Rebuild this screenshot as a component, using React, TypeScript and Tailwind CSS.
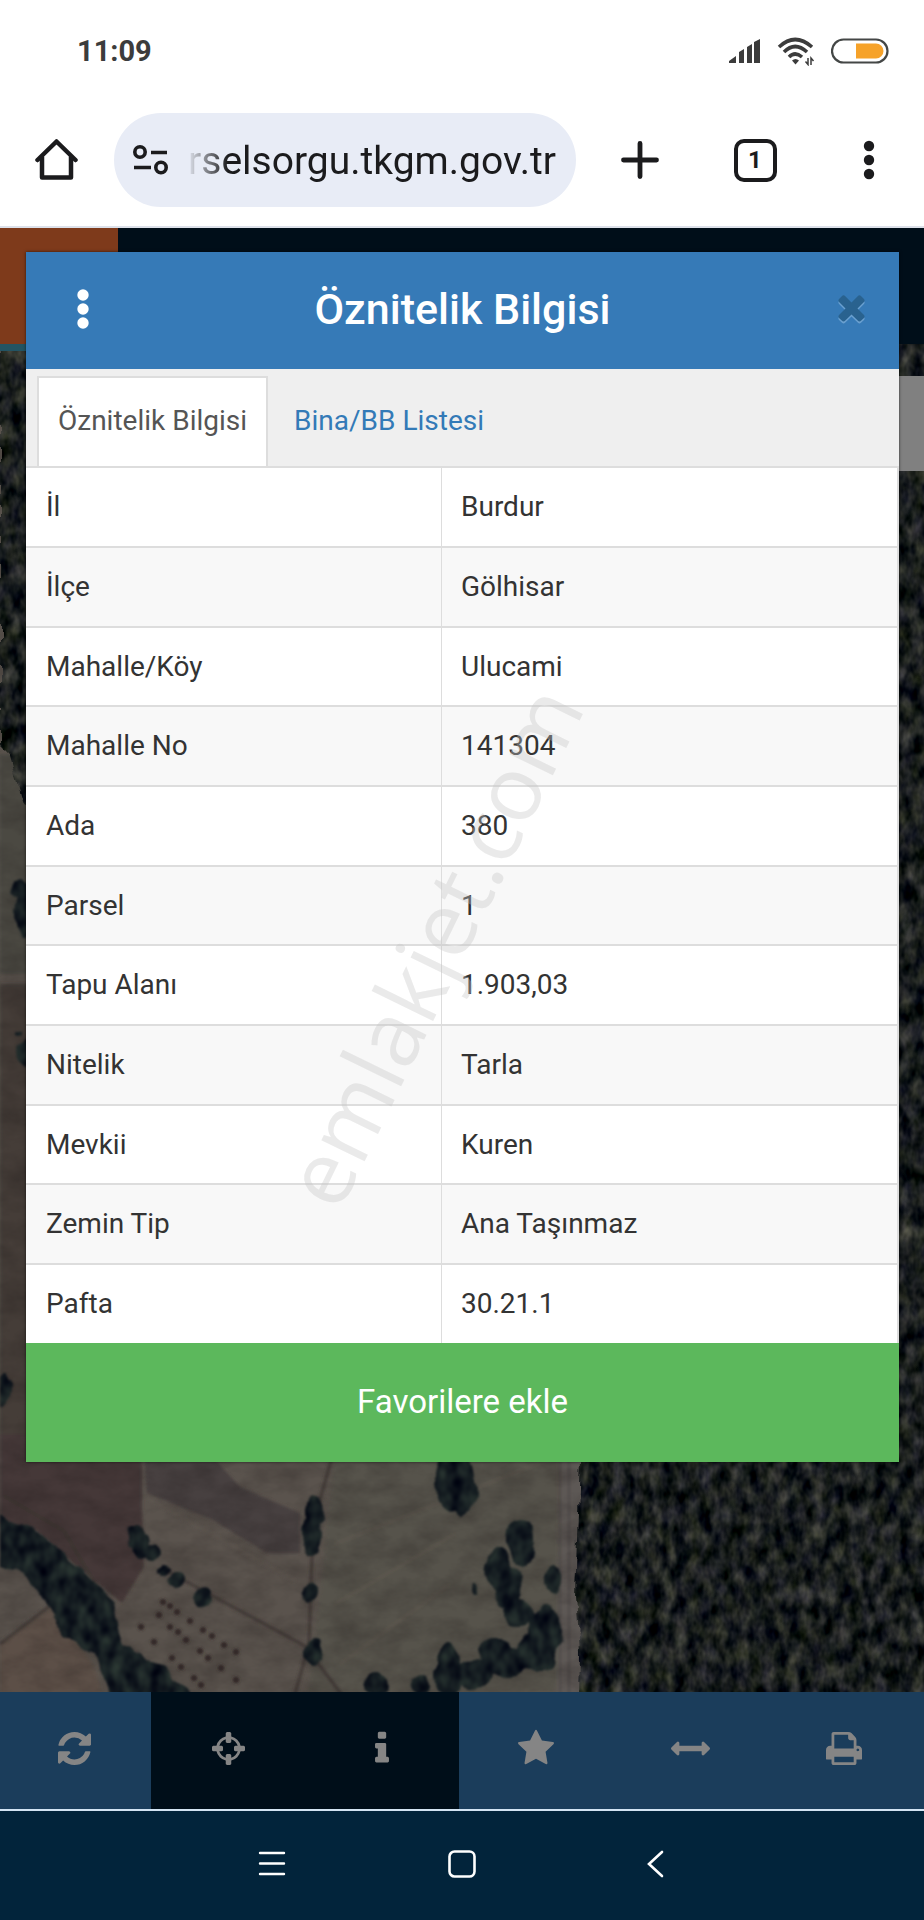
import { useState } from "react";

const rows: [string, string][] = [
  ["İl", "Burdur"],
  ["İlçe", "Gölhisar"],
  ["Mahalle/Köy", "Ulucami"],
  ["Mahalle No", "141304"],
  ["Ada", "380"],
  ["Parsel", "1"],
  ["Tapu Alanı", "1.903,03"],
  ["Nitelik", "Tarla"],
  ["Mevkii", "Kuren"],
  ["Zemin Tip", "Ana Taşınmaz"],
  ["Pafta", "30.21.1"],
];

const glyphs = {
  refresh: {
    w: 1536,
    d: "M1511 1056q0 5-1 7-64 268-268 434.5t-478 166.5q-146 0-282.5-55t-243.5-157l-129 129q-19 19-45 19t-45-19-19-45v-448q0-26 19-45t45-19h448q26 0 45 19t19 45-19 45l-137 137q71 66 161 102t187 36q134 0 250-65t186-179q11-17 53-117 8-23 30-23h192q13 0 22.5 9.5t9.5 22.5zm25-800v448q0 26-19 45t-45 19h-448q-26 0-45-19t-19-45 19-45l138-138q-148-137-349-137-134 0-250 65t-186 179q-11 17-53 117-8 23-30 23h-199q-13 0-22.5-9.5t-9.5-22.5v-7q65-268 270-434.5t480-166.5q146 0 284 55.5t245 156.5l130-129q19-19 45-19t45 19 19 45z",
  },
  crosshairs: {
    w: 1536,
    d: "M1197 1024h-109q-26 0-45-19t-19-45v-128q0-26 19-45t45-19h109q-32-108-112.5-188.5t-188.5-112.5v109q0 26-19 45t-45 19h-128q-26 0-45-19t-19-45v-109q-108 32-188.5 112.5t-112.5 188.5h109q26 0 45 19t19 45v128q0 26-19 45t-45 19h-109q32 108 112.5 188.5t188.5 112.5v-109q0-26 19-45t45-19h128q26 0 45 19t19 45v109q108-32 188.5-112.5t112.5-188.5zm339-192v128q0 26-19 45t-45 19h-143q-37 161-154.5 278.5t-278.5 154.5v143q0 26-19 45t-45 19h-128q-26 0-45-19t-19-45v-143q-161-37-278.5-154.5t-154.5-278.5h-143q-26 0-45-19t-19-45v-128q0-26 19-45t45-19h143q37-161 154.5-278.5t278.5-154.5v-143q0-26 19-45t45-19h128q26 0 45 19t19 45v143q161 37 278.5 154.5t154.5 278.5h143q26 0 45 19t19 45z",
  },
  info: {
    w: 640,
    d: "M640 1344v128q0 26-19 45t-45 19h-512q-26 0-45-19t-19-45v-128q0-26 19-45t45-19h64v-384h-64q-26 0-45-19t-19-45v-128q0-26 19-45t45-19h384q26 0 45 19t19 45v576h64q26 0 45 19t19 45zm-128-1152v192q0 26-19 45t-45 19h-256q-26 0-45-19t-19-45v-192q0-26 19-45t45-19h256q26 0 45 19t19 45z",
  },
  star: {
    w: 1664,
    d: "M1664 647q0 22-26 48l-363 354 86 500q1 7 1 20 0 21-10.5 35.5t-30.5 14.5q-19 0-40-12l-449-236-449 236q-22 12-40 12-21 0-31.5-14.5t-10.5-35.5q0-6 2-20l86-500-364-354q-25-27-25-48 0-37 56-46l502-73 225-455q19-41 49-41t49 41l225 455 502 73q56 9 56 46z",
  },
  arrows: {
    w: 1792,
    d: "M1792 896q0 26-19 45l-256 256q-19 19-45 19t-45-19-19-45v-128h-1024v128q0 26-19 45t-45 19-45-19l-256-256q-19-19-19-45t19-45l256-256q19-19 45-19t45 19 19 45v128h1024v-128q0-26 19-45t45-19 45 19l256 256q19 19 19 45z",
  },
  print: {
    w: 1664,
    d: "M384 1536h896v-256h-896v256zm0-640h896v-384h-160q-40 0-68-28t-28-68v-160h-640v640zm1152 64q0-26-19-45t-45-19-45 19-19 45 19 45 45 19 45-19 19-45zm128 0v416q0 13-9.5 22.5t-22.5 9.5h-224v160q0 40-28 68t-68 28h-960q-40 0-68-28t-28-68v-160h-224q-13 0-22.5-9.5t-9.5-22.5v-416q0-79 56.5-135.5t135.5-56.5h64v-544q0-40 28-68t68-28h672q40 0 88 20t76 48l152 152q28 28 48 76t20 88v256h64q79 0 135.5 56.5t56.5 135.5z",
  },
  times: {
    w: 1408,
    d: "M1298 1322q0 40-28 68l-136 136q-28 28-68 28t-68-28l-294-294-294 294q-28 28-68 28t-68-28l-136-136q-28-28-28-68t28-68l294-294-294-294q-28-28-28-68t28-68l136-136q28-28 68-28t68 28l294 294 294-294q28-28 68-28t68 28l136 136q28 28 28 68t-28 68l-294 294 294 294q28 28 28 68z",
  },
};

function Glyph({ name, className }: { name: keyof typeof glyphs; className: string }) {
  const g = glyphs[name];
  return (
    <svg viewBox={`0 0 ${g.w} 1792`} className={className} fill="currentColor" aria-hidden="true">
      <path d={g.d} />
    </svg>
  );
}

function StatusBar() {
  return (
    <div className="flex h-[101px] items-center justify-between pr-[35px] pl-[77px] text-[#3c3c3c]">
      <span className="text-[29px] leading-9 font-bold">11:09</span>
      <div className="flex items-center gap-4">
        <svg width="32" height="26" viewBox="0 0 32 26" fill="currentColor" aria-hidden="true">
          <path d="M0 25v-2l7-5v7zM10 25V14l5-3v14zM18 25V9l5-3v19zM25 25V4l6-3v24z" />
        </svg>
        <svg width="38" height="30" viewBox="0 0 38 30" fill="none" stroke="currentColor" aria-hidden="true">
          <g strokeWidth="3.6">
            <path d="M2 11Q18-4 35 11" />
            <path d="M7 16Q18 5 30 16" />
            <path d="M12 21Q18 15 25 21" />
          </g>
          <path d="M15 24.5q3.500-3 7 0L18.500 28.500z" fill="currentColor" stroke="none" />
          <path d="M31 22v6.500l-2.500-3M34 29v-7l2.500 3" strokeWidth="1.500" />
        </svg>
        <svg width="58" height="26" viewBox="0 0 58 26" aria-hidden="true">
          <rect x="1" y="1.500" width="55.500" height="23" rx="11.500" fill="none" stroke="#444746" strokeWidth="2.200" />
          <path d="M25 5.500h20a7.500 7.500 0 0 1 0 15H25z" fill="#f6a229" />
        </svg>
      </div>
    </div>
  );
}

function BrowserBar() {
  return (
    <div className="flex items-start border-b-2 border-[#dde1ea] pt-3 pb-[19px] pl-[34px] text-[#1b1b1d]">
      <button aria-label="Ana sayfa" className="flex h-[94px] w-11 items-center justify-center">
        <svg width="44" height="44" viewBox="0 0 44 44" fill="none" stroke="currentColor" strokeWidth="4.500" strokeLinejoin="round" strokeLinecap="round" aria-hidden="true">
          <path d="M3.500 22 22.500 3.500 41.500 22" />
          <path d="M8 19v20.500h29V19" />
        </svg>
      </button>
      <div className="ml-9 flex h-[94px] min-w-0 flex-1 items-center rounded-full bg-[#e8ecf6] pr-5 pl-[18px]">
        <svg width="38" height="32" viewBox="0 0 38 32" className="shrink-0" fill="none" stroke="currentColor" strokeWidth="3.600" aria-hidden="true">
          <circle cx="8" cy="8" r="5.200" />
          <path d="M19 8.500h16M2 23.500h17" />
          <circle cx="29" cy="23.500" r="5.200" />
        </svg>
        <input
          readOnly
          aria-label="Adres"
          value="rselsorgu.tkgm.gov.tr"
          className="ml-2 w-full min-w-0 bg-transparent pt-0.5 text-right text-[39px] leading-[48px] outline-none [mask-image:linear-gradient(to_right,transparent_8px,black_50px)]"
        />
      </div>
      <div className="ml-2 grid h-[94px] w-[340px] grid-cols-[112px_118px_1fr] items-center justify-items-center">
        <button aria-label="Yeni sekme">
          <svg width="38" height="38" viewBox="0 0 38 38" stroke="currentColor" strokeWidth="4.800" strokeLinecap="round" aria-hidden="true">
            <path d="M19 2.500v33M2.500 19h33" />
          </svg>
        </button>
        <button aria-label="Sekmeler" className="flex h-[43px] w-[43px] items-center justify-center rounded-[10px] border-4 border-current text-[24px] leading-6 font-bold">
          1
        </button>
        <button aria-label="Menü">
          <svg width="12" height="40" viewBox="0 0 12 40" fill="currentColor" aria-hidden="true">
            <circle cx="6" cy="6" r="5.200" />
            <circle cx="6" cy="20" r="5.200" />
            <circle cx="6" cy="34" r="5.200" />
          </svg>
        </button>
      </div>
    </div>
  );
}

const bushes: [number, number, number, number][] = [
  [315, 1168, 8, 15], [312, 1190, 9, 20], [309, 1249, 8, 10], [314, 1308, 9, 13],
  [134, 1192, 8, 12], [142, 1202, 9, 12], [153, 1208, 6, 7], [176, 1236, 9, 7], [203, 1254, 9, 10], [165, 1226, 5, 5],
  [455, 1136, 20, 32], [463, 1150, 14, 22], [520, 1194, 14, 20], [523, 1208, 10, 16], [498, 1226, 12, 22],
  [508, 1245, 15, 20], [519, 1270, 14, 14], [553, 1235, 8, 14], [474, 1245, 3, 6],
  [545, 1290, 16, 30], [535, 1310, 20, 18], [545, 1315, 10, 12], [495, 1310, 16, 18], [508, 1318, 22, 14],
  [475, 1330, 20, 15], [449, 1332, 14, 20], [448, 1318, 10, 18], [420, 1342, 10, 8], [376, 1340, 10, 12],
  [4, 1046, 9, 16], [22, 545, 12, 10], [24, 570, 9, 22], [16, 690, 3, 3], [26, 708, 8, 14],
];

const stumps = [
  [163, 1258], [170, 1262], [177, 1268], [190, 1277], [203, 1286], [212, 1292], [224, 1301], [236, 1308],
  [141, 1283], [154, 1298], [159, 1271], [170, 1283], [178, 1288], [186, 1296], [200, 1307], [208, 1314],
  [221, 1324], [172, 1314], [181, 1323], [194, 1334], [201, 1341], [236, 1336],
];

function SatelliteMap() {
  return (
    <svg className="h-full w-full" viewBox="0 0 924 1465" preserveAspectRatio="xMidYMax slice" aria-hidden="true">
      <defs>
        <filter id="forest" filterUnits="userSpaceOnUse" x="0" y="0" width="924" height="1465" colorInterpolationFilters="sRGB">
          <feTurbulence type="fractalNoise" baseFrequency="0.05" numOctaves="2" seed="3" result="d" />
          <feDisplacementMap in="SourceGraphic" in2="d" scale="14" xChannelSelector="R" yChannelSelector="G" result="shape" />
          <feTurbulence type="fractalNoise" baseFrequency="0.08 0.05" numOctaves="3" seed="8" />
          <feColorMatrix values="0.5 0.08 0 0 -0.19  0.46 0.1 0 0 -0.165  0.4 0 0.08 0 -0.125  0 0 0 0 1" />
          <feGaussianBlur stdDeviation="0.6" />
          <feComposite in2="shape" operator="in" />
        </filter>
        <filter id="grove" filterUnits="userSpaceOnUse" x="0" y="0" width="924" height="1465" colorInterpolationFilters="sRGB">
          <feTurbulence type="fractalNoise" baseFrequency="0.05" numOctaves="2" seed="3" result="d" />
          <feDisplacementMap in="SourceGraphic" in2="d" scale="12" xChannelSelector="R" yChannelSelector="G" result="shape" />
          <feTurbulence type="fractalNoise" baseFrequency="0.08 0.06" numOctaves="2" seed="4" />
          <feColorMatrix values="0.25 0 0 0 -0.04  0.3 0 0 0 -0.035  0.2 0 0 0 0.03  0 0 0 0 1" />
          <feComposite in2="shape" operator="in" />
          <feGaussianBlur stdDeviation="1.2" />
        </filter>
        <filter id="soil" x="0" y="0" width="100%" height="100%" colorInterpolationFilters="sRGB">
          <feTurbulence type="fractalNoise" baseFrequency="0.03 0.05" numOctaves="4" seed="5" />
          <feColorMatrix values="0 0 0 0 0.1  0 0 0 0 0.08  0 0 0 0 0.08  1.1 0 0 0 -0.35" />
        </filter>
        <filter id="soft">
          <feGaussianBlur stdDeviation="1.5" />
        </filter>
      </defs>
      <rect width="924" height="1465" fill="#5a534d" />
      <g filter="url(#soft)">
        <path d="M0 410h30v220H0z" fill="#4b4842" />
        <path d="M0 640h40v470H0z" fill="#453c39" />
        <path d="M0 1090h142v75l2 58-22 36-42-34-44-38L0 1180z" fill="#453937" />
        <path d="M142 1090h50l48 53 60 26v40h-33l-54-33-66-27z" fill="#474040" />
        <path d="M334 1110h224v238H308l12-100z" fill="#57534b" />
        <path d="M0 1300l54-38 40 60 12 40H0z" fill="#5c5046" />
        <path d="M560 1110h24v255h-28z" fill="#5d5855" />
        <path d="M4 1152l60 35 50 85M165 1226l140 76 40 53M333 1110l-20 70-4 120-14 50M0 1300l55-42" fill="none" stroke="#3f3835" strokeWidth="3" />
        <path d="M145 1152l150 85M335 1200l215-85M335 1260l120-70M340 1320l110-80" fill="none" stroke="#625b53" strokeWidth="2" opacity=".6" />
        <path d="M560 1110v245M569 1110v245" stroke="#494441" strokeWidth="1.500" />
      </g>
      <rect width="924" height="1465" filter="url(#soil)" opacity=".4" />
      <g filter="url(#forest)">
        <path d="M0-10h40v480L24 460 10 410 0 400z" />
        <path d="M582 1090h358v400H576l4-180-4-60z" />
        <path d="M890-10h60v1200h-60z" />
      </g>
      <g filter="url(#grove)">
        <path d="M-10 1170l46 16 44 37 34 36 8 40 46 26 24 30h-82l-14-46-30-14-24-42-24-28-28-2z" />
        {bushes.map(([x, y, rx, ry], i) => (
          <ellipse key={i} cx={x} cy={y} rx={rx} ry={ry} />
        ))}
      </g>
      <g fill="#2b2321" filter="url(#soft)">
        {stumps.map(([x, y], i) => (
          <circle key={i} cx={x} cy={y} r="3" />
        ))}
      </g>
    </svg>
  );
}

function AttributeDialog() {
  const [tab, setTab] = useState(0);
  const active = "border-[#ddd] bg-white text-[#555]";
  const idle = "border-transparent text-[#337ab7]";
  return (
    <section role="dialog" aria-label="Öznitelik Bilgisi" className="relative mt-6 mr-[25px] ml-[26px] shadow-[0_0_3px_rgba(0,0,0,0.6)]">
      <header className="flex h-[117px] items-center justify-between bg-[#367ab7] px-8 text-white">
        <button aria-label="Seçenekler" className="flex w-[31px] justify-end">
          <svg width="12" height="42" viewBox="0 0 12 42" fill="currentColor" aria-hidden="true" className="mb-1">
            <circle cx="6" cy="7" r="5.700" />
            <circle cx="6" cy="21" r="5.700" />
            <circle cx="6" cy="35" r="5.700" />
          </svg>
        </button>
        <h1 className="pb-1 text-[43px] leading-[48px] font-medium">Öznitelik Bilgisi</h1>
        <button aria-label="Kapat" className="pb-2 text-[#29628f] drop-shadow-[0_2px_0_#6aa0d0]">
          <Glyph name="times" className="h-[40px] w-[31px]" />
        </button>
      </header>
      <div role="tablist" className="flex bg-[#efefef] pt-[7px] pl-[11px] text-[28px] leading-8">
        <button role="tab" aria-selected={tab === 0} onClick={() => setTab(0)} className={`h-[90px] border-2 border-b-0 px-[19px] pb-0.5 ${tab === 0 ? active : idle}`}>
          Öznitelik Bilgisi
        </button>
        <button role="tab" aria-selected={tab === 1} onClick={() => setTab(1)} className={`ml-[5px] h-[90px] border-2 border-b-0 px-[19px] pb-0.5 ${tab === 1 ? active : idle}`}>
          Bina/BB Listesi
        </button>
      </div>
      <table className="w-full border-separate border-spacing-0 border-r-2 border-[#ddd] bg-white text-[28px] leading-8 text-[#333]">
        <tbody>
          {rows.map(([label, value]) => (
            <tr key={label} className="h-[80px] even:bg-[#f8f8f8] nth-[3n]:h-[79px]">
              <th scope="row" className="w-[416px] border-t-2 border-r border-[#ddd] py-0 pl-5 text-left font-normal">
                {label}
              </th>
              <td className="border-t-2 border-[#ddd] py-0 pl-[19px]">{value}</td>
            </tr>
          ))}
        </tbody>
      </table>
      <button className="block h-[119px] w-full bg-[#5cb85c] pb-0.5 text-[33px] leading-9 text-white">Favorilere ekle</button>
    </section>
  );
}

const tools: { name: keyof typeof glyphs; label: string; bg: string; size: string }[] = [
  { name: "refresh", label: "Yenile", bg: "bg-[#1b3d5b]", size: "h-[39px] w-[33px]" },
  { name: "crosshairs", label: "Konum", bg: "bg-[#000e19]", size: "h-[39px] w-[33px]" },
  { name: "info", label: "Bilgi", bg: "bg-[#000e19]", size: "h-[39px] w-[14px]" },
  { name: "star", label: "Favoriler", bg: "bg-[#1b3d5b]", size: "h-[39px] w-[36px]" },
  { name: "arrows", label: "Ölçüm", bg: "bg-[#1b3d5b]", size: "h-[39px] w-[39px]" },
  { name: "print", label: "Yazdır", bg: "bg-[#1b3d5b]", size: "h-[39px] w-[36px]" },
];

export default function App() {
  return (
    <div className="relative flex min-h-screen flex-col overflow-hidden bg-white font-['Roboto','Noto_Sans',sans-serif]">
      <StatusBar />
      <BrowserBar />
      <main className="relative flex flex-1 flex-col">
        <div className="absolute inset-0 flex flex-col">
          <div className="flex h-[116px] bg-[#000e19]">
            <div className="w-[118px] bg-[#7e3a1b]" />
          </div>
          <div className="relative min-h-0 flex-1 bg-[#14181c]">
            <SatelliteMap />
            <div className="absolute top-0 left-0 h-[7px] w-[118px] bg-[#235463]" />
            <div className="absolute top-8 right-0 h-[95px] w-[30px] bg-[#808080]" />
          </div>
        </div>
        <AttributeDialog />
        <nav className="relative mt-auto -ml-[3px] grid grid-cols-6 bg-[#1b3d5b] pr-[3px] text-[#858585]">
          {tools.map((t) => (
            <button key={t.name} aria-label={t.label} className={`flex h-[117px] items-center justify-center pb-1 ${t.bg}`}>
              <Glyph name={t.name} className={t.size} />
            </button>
          ))}
        </nav>
      </main>
      <nav className="flex h-[111px] items-center justify-center gap-[162px] border-t-2 border-[#d3e4f3] bg-[#02243b] pb-1 text-white">
        <button aria-label="Son uygulamalar">
          <svg width="28" height="28" viewBox="0 0 28 28" stroke="currentColor" strokeWidth="2.400" strokeLinecap="round" aria-hidden="true">
            <path d="M2 3h24M2 13.500h24M2 24h24" />
          </svg>
        </button>
        <button aria-label="Ana ekran">
          <svg width="28" height="28" viewBox="0 0 28 28" fill="none" stroke="currentColor" strokeWidth="2.600" aria-hidden="true">
            <rect x="1.500" y="1.500" width="25" height="25" rx="5" />
          </svg>
        </button>
        <button aria-label="Geri">
          <svg width="28" height="28" viewBox="0 0 28 28" fill="none" stroke="currentColor" strokeWidth="2.600" strokeLinecap="round" aria-hidden="true">
            <path d="M24 2 11 14l13 12" />
          </svg>
        </button>
      </nav>
      <div className="pointer-events-none absolute inset-0 flex items-center justify-center">
        <span className="-rotate-[64deg] pb-[68px] font-['Open_Sans',sans-serif] text-[90px] leading-[96px] text-[rgba(196,196,196,0.36)]">
          emlakjet.com
        </span>
      </div>
    </div>
  );
}
